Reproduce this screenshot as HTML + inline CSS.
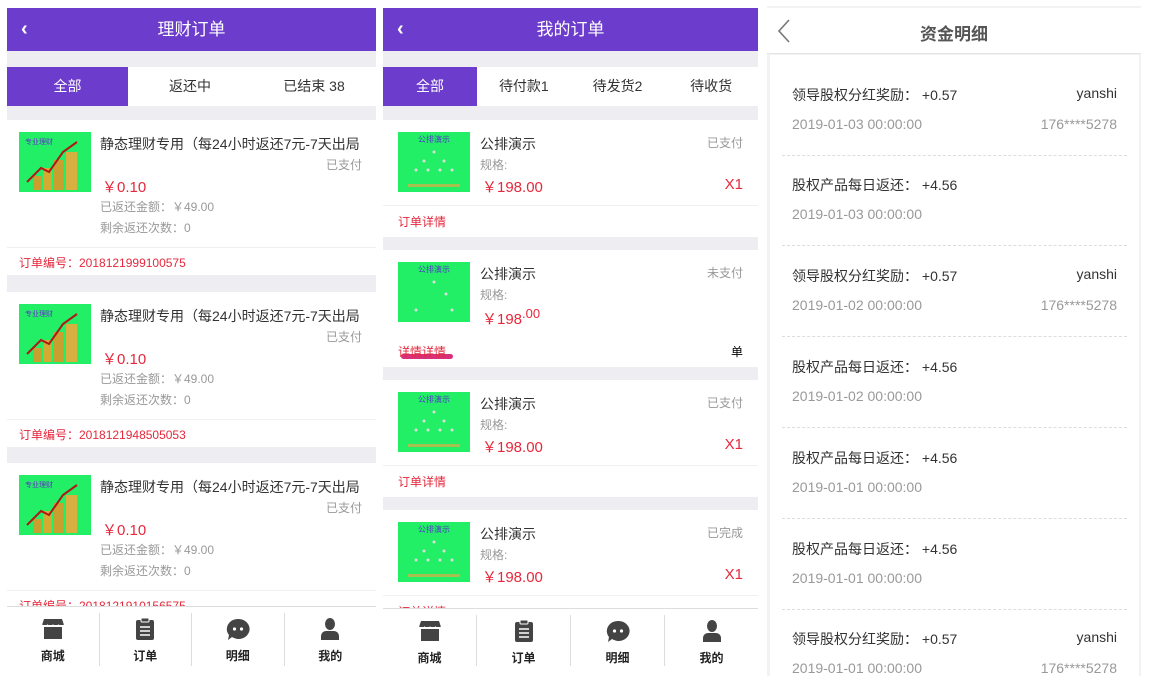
<!DOCTYPE html>
<html><head><meta charset="utf-8"><style>
*{margin:0;padding:0;box-sizing:border-box}
body{width:1149px;height:676px;background:#fff;position:relative;overflow:hidden;font-family:"Liberation Sans","Noto Sans CJK SC",sans-serif;color:#333}
.a{position:absolute;white-space:nowrap}
.p{position:absolute;background:#eeeef2;overflow:hidden}
.hd{position:absolute;left:0;right:0;top:0;height:43px;background:#6c3ccc;color:#fff;font-size:17px;text-align:center;line-height:43px}
.tabs{position:absolute;left:0;right:0;top:59px;height:39px;background:#fff;display:flex;font-size:14px;line-height:39px}
.tabs div{flex:1;text-align:center;color:#333}
.tabs .on{background:#6c3ccc;color:#fff}
.card{position:absolute;left:0;right:0;background:#fff}
.img1{position:absolute;background:#22ee66;overflow:hidden}
.red{color:#e5283c}.gr{color:#999}
.nav{position:absolute;left:0;right:0;bottom:0;background:#fff;border-top:1px solid #ddd;display:flex}
.nav div{flex:1;text-align:center;border-right:1px solid #ddd;margin:6px 0;font-size:12px;font-weight:bold;color:#222;position:relative}
.nav div:last-child{border-right:none}
.nav svg{display:block;margin:5px auto 7px}
.row{position:absolute;left:22px;right:22px;font-size:14px}
</style></head><body>

<!-- Panel 1 -->
<div class="p" style="left:7px;top:8px;width:369px;height:664px">
 <div class="hd"><span class="a" style="left:14px;top:0;font-size:20px;font-weight:bold">&#8249;</span>理财订单</div>
 <div class="tabs"><div class="on" style="flex:0 0 121px">全部</div><div>返还中</div><div>已结束 38</div></div>
 <div class="card" style="top:112px;height:155px">
  <div class="img1" style="left:12px;top:12px;width:72px;height:60px"><svg width="72" height="60"><text x="6" y="12" font-size="7" fill="#6633cc" font-family="Liberation Sans,Noto Sans CJK SC,sans-serif">专业理财</text><rect x="14" y="44" width="8" height="14" fill="#c9a030"/><rect x="24" y="36" width="9" height="22" fill="#d4aa33"/><rect x="35" y="28" width="10" height="30" fill="#c9a030"/><rect x="47" y="20" width="11" height="38" fill="#d8b040"/><polyline points="8,50 22,36 30,40 44,20 58,10" stroke="#b01818" stroke-width="2" fill="none"/></svg></div>
  <span class="a" style="left:93px;top:14px;font-size:14px">静态理财专用（每24小时返还7元-7天出局</span>
  <span class="a gr" style="right:14px;top:36px;font-size:12px">已支付</span>
  <span class="a red" style="left:95px;top:56px;font-size:15px">￥0.10</span>
  <span class="a gr" style="left:93px;top:78px;font-size:12px">已返还金额：￥49.00</span>
  <span class="a gr" style="left:93px;top:99px;font-size:12px">剩余返还次数：0</span>
  <div class="a" style="left:0;right:0;top:127px;border-top:1px solid #f0f0f0"></div>
  <span class="a red" style="left:12px;top:134px;font-size:12px">订单编号：2018121999100575</span>
 </div>
 <div class="card" style="top:284px;height:155px">
  <div class="img1" style="left:12px;top:12px;width:72px;height:60px"><svg width="72" height="60"><text x="6" y="12" font-size="7" fill="#6633cc" font-family="Liberation Sans,Noto Sans CJK SC,sans-serif">专业理财</text><rect x="14" y="44" width="8" height="14" fill="#c9a030"/><rect x="24" y="36" width="9" height="22" fill="#d4aa33"/><rect x="35" y="28" width="10" height="30" fill="#c9a030"/><rect x="47" y="20" width="11" height="38" fill="#d8b040"/><polyline points="8,50 22,36 30,40 44,20 58,10" stroke="#b01818" stroke-width="2" fill="none"/></svg></div>
  <span class="a" style="left:93px;top:14px;font-size:14px">静态理财专用（每24小时返还7元-7天出局</span>
  <span class="a gr" style="right:14px;top:36px;font-size:12px">已支付</span>
  <span class="a red" style="left:95px;top:56px;font-size:15px">￥0.10</span>
  <span class="a gr" style="left:93px;top:78px;font-size:12px">已返还金额：￥49.00</span>
  <span class="a gr" style="left:93px;top:99px;font-size:12px">剩余返还次数：0</span>
  <div class="a" style="left:0;right:0;top:127px;border-top:1px solid #f0f0f0"></div>
  <span class="a red" style="left:12px;top:134px;font-size:12px">订单编号：2018121948505053</span>
 </div>
 <div class="card" style="top:455px;height:155px">
  <div class="img1" style="left:12px;top:12px;width:72px;height:60px"><svg width="72" height="60"><text x="6" y="12" font-size="7" fill="#6633cc" font-family="Liberation Sans,Noto Sans CJK SC,sans-serif">专业理财</text><rect x="14" y="44" width="8" height="14" fill="#c9a030"/><rect x="24" y="36" width="9" height="22" fill="#d4aa33"/><rect x="35" y="28" width="10" height="30" fill="#c9a030"/><rect x="47" y="20" width="11" height="38" fill="#d8b040"/><polyline points="8,50 22,36 30,40 44,20 58,10" stroke="#b01818" stroke-width="2" fill="none"/></svg></div>
  <span class="a" style="left:93px;top:14px;font-size:14px">静态理财专用（每24小时返还7元-7天出局</span>
  <span class="a gr" style="right:14px;top:36px;font-size:12px">已支付</span>
  <span class="a red" style="left:95px;top:56px;font-size:15px">￥0.10</span>
  <span class="a gr" style="left:93px;top:78px;font-size:12px">已返还金额：￥49.00</span>
  <span class="a gr" style="left:93px;top:99px;font-size:12px">剩余返还次数：0</span>
  <div class="a" style="left:0;right:0;top:127px;border-top:1px solid #f0f0f0"></div>
  <span class="a red" style="left:12px;top:134px;font-size:12px">订单编号：2018121910156575</span>
 </div>
 <div class="nav" style="height:66px">
  <div><svg width="24" height="22" viewBox="0 0 24 22"><path d="M3 1h18l2 6H1z" fill="#444"/><path d="M3 9h18v12H3z" fill="#444"/><path d="M1 7q2.75 3 5.5 0q2.75 3 5.5 0q2.75 3 5.5 0q2.75 3 5.5 0" stroke="#fff" stroke-width="1" fill="none"/></svg>商城</div>
  <div><svg width="20" height="22" viewBox="0 0 20 22"><rect x="1" y="2" width="18" height="20" rx="2" fill="#444"/><rect x="6" y="0" width="8" height="4" rx="1" fill="#444" stroke="#fff"/><path d="M5 9h10M5 13h10M5 17h10" stroke="#fff" stroke-width="1.5"/></svg>订单</div>
  <div><svg width="24" height="22" viewBox="0 0 24 22"><path d="M12 1a11 10 0 1 1-6 18l-4 3 1-5A11 10 0 0 1 12 1z" fill="#444"/><circle cx="8.5" cy="11" r="1.6" fill="#fff"/><circle cx="15.5" cy="11" r="1.6" fill="#fff"/></svg>明细</div>
  <div><svg width="22" height="22" viewBox="0 0 22 22"><ellipse cx="11" cy="6" rx="5" ry="6" fill="#444"/><path d="M2 22v-4a5 5 0 0 1 5-5h8a5 5 0 0 1 5 5v4z" fill="#444"/></svg>我的</div>
 </div>
</div>

<!-- Panel 2 -->
<div class="p" style="left:383px;top:8px;width:375px;height:664px">
 <div class="hd"><span class="a" style="left:14px;top:0;font-size:20px;font-weight:bold">&#8249;</span>我的订单</div>
 <div class="tabs" style="top:59px"><div class="on" style="flex:0 0 94px">全部</div><div>待付款1</div><div>待发货2</div><div>待收货</div></div>
 <div class="card" style="top:112px;height:117px">
  <div class="img1" style="left:15px;top:12px;width:72px;height:60px"><svg width="72" height="60"><text x="36" y="10" font-size="8" fill="#5533cc" text-anchor="middle" font-family="Liberation Sans,Noto Sans CJK SC,sans-serif">公排演示</text><g fill="#ddd"><circle cx="36" cy="20" r="1.5"/><circle cx="26" cy="29" r="1.5"/><circle cx="46" cy="29" r="1.5"/><circle cx="18" cy="38" r="1.5"/><circle cx="30" cy="38" r="1.5"/><circle cx="42" cy="38" r="1.5"/><circle cx="54" cy="38" r="1.5"/></g><rect x="10" y="52" width="52" height="3" fill="#a8c050"/></svg></div>
  <span class="a" style="left:97px;top:14px;font-size:14px">公排演示</span>
  <span class="a gr" style="right:15px;top:14px;font-size:12px">已支付</span>
  <span class="a gr" style="left:97px;top:36px;font-size:12px">规格:</span>
  <span class="a red" style="left:99px;top:56px;font-size:15px">￥198.00</span>
  <span class="a red" style="right:15px;top:56px;font-size:15px">X1</span>
  <div class="a" style="left:0;right:0;top:85px;border-top:1px solid #f0f0f0"></div>
  <span class="a red" style="left:15px;top:93px;font-size:12px">订单详情</span>
 </div>
 <div class="card" style="top:242px;height:117px">
  <div class="img1" style="left:15px;top:12px;width:72px;height:60px"><svg width="72" height="60"><text x="36" y="10" font-size="8" fill="#5533cc" text-anchor="middle" font-family="Liberation Sans,Noto Sans CJK SC,sans-serif">公排演示</text><g fill="#ddd"><circle cx="36" cy="20" r="1.5"/><circle cx="48" cy="32" r="1.5"/><circle cx="18" cy="48" r="1.5"/><circle cx="54" cy="48" r="1.5"/></g></svg></div>
  <span class="a" style="left:97px;top:14px;font-size:14px">公排演示</span>
  <span class="a gr" style="right:15px;top:14px;font-size:12px">未支付</span>
  <span class="a gr" style="left:97px;top:36px;font-size:12px">规格:</span>
  <span class="a red" style="left:99px;top:56px;font-size:15px">￥198<sup style="font-size:13px">.00</sup></span>
  <span class="a" style="left:18px;top:104px;width:52px;height:5px;background:#d8307a;border-radius:3px"></span>
  <span class="a red" style="left:15px;top:93px;font-size:12px">详情详情</span>
  <span class="a" style="right:15px;top:93px;font-size:12px;color:#000">单</span>
 </div>
 <div class="card" style="top:372px;height:117px">
  <div class="img1" style="left:15px;top:12px;width:72px;height:60px"><svg width="72" height="60"><text x="36" y="10" font-size="8" fill="#5533cc" text-anchor="middle" font-family="Liberation Sans,Noto Sans CJK SC,sans-serif">公排演示</text><g fill="#ddd"><circle cx="36" cy="20" r="1.5"/><circle cx="26" cy="29" r="1.5"/><circle cx="46" cy="29" r="1.5"/><circle cx="18" cy="38" r="1.5"/><circle cx="30" cy="38" r="1.5"/><circle cx="42" cy="38" r="1.5"/><circle cx="54" cy="38" r="1.5"/></g><rect x="10" y="52" width="52" height="3" fill="#a8c050"/></svg></div>
  <span class="a" style="left:97px;top:14px;font-size:14px">公排演示</span>
  <span class="a gr" style="right:15px;top:14px;font-size:12px">已支付</span>
  <span class="a gr" style="left:97px;top:36px;font-size:12px">规格:</span>
  <span class="a red" style="left:99px;top:56px;font-size:15px">￥198.00</span>
  <span class="a red" style="right:15px;top:56px;font-size:15px">X1</span>
  <div class="a" style="left:0;right:0;top:85px;border-top:1px solid #f0f0f0"></div>
  <span class="a red" style="left:15px;top:93px;font-size:12px">订单详情</span>
 </div>
 <div class="card" style="top:502px;height:117px">
  <div class="img1" style="left:15px;top:12px;width:72px;height:60px"><svg width="72" height="60"><text x="36" y="10" font-size="8" fill="#5533cc" text-anchor="middle" font-family="Liberation Sans,Noto Sans CJK SC,sans-serif">公排演示</text><g fill="#ddd"><circle cx="36" cy="20" r="1.5"/><circle cx="26" cy="29" r="1.5"/><circle cx="46" cy="29" r="1.5"/><circle cx="18" cy="38" r="1.5"/><circle cx="30" cy="38" r="1.5"/><circle cx="42" cy="38" r="1.5"/><circle cx="54" cy="38" r="1.5"/></g><rect x="10" y="52" width="52" height="3" fill="#a8c050"/></svg></div>
  <span class="a" style="left:97px;top:14px;font-size:14px">公排演示</span>
  <span class="a gr" style="right:15px;top:14px;font-size:12px">已完成</span>
  <span class="a gr" style="left:97px;top:36px;font-size:12px">规格:</span>
  <span class="a red" style="left:99px;top:56px;font-size:15px">￥198.00</span>
  <span class="a red" style="right:15px;top:56px;font-size:15px">X1</span>
  <div class="a" style="left:0;right:0;top:85px;border-top:1px solid #f0f0f0"></div>
  <span class="a red" style="left:15px;top:93px;font-size:12px">订单详情</span>
 </div>
 <div class="nav" style="height:64px">
  <div><svg width="24" height="22" viewBox="0 0 24 22"><path d="M3 1h18l2 6H1z" fill="#444"/><path d="M3 9h18v12H3z" fill="#444"/><path d="M1 7q2.75 3 5.5 0q2.75 3 5.5 0q2.75 3 5.5 0q2.75 3 5.5 0" stroke="#fff" stroke-width="1" fill="none"/></svg>商城</div>
  <div><svg width="20" height="22" viewBox="0 0 20 22"><rect x="1" y="2" width="18" height="20" rx="2" fill="#444"/><rect x="6" y="0" width="8" height="4" rx="1" fill="#444" stroke="#fff"/><path d="M5 9h10M5 13h10M5 17h10" stroke="#fff" stroke-width="1.5"/></svg>订单</div>
  <div><svg width="24" height="22" viewBox="0 0 24 22"><path d="M12 1a11 10 0 1 1-6 18l-4 3 1-5A11 10 0 0 1 12 1z" fill="#444"/><circle cx="8.5" cy="11" r="1.6" fill="#fff"/><circle cx="15.5" cy="11" r="1.6" fill="#fff"/></svg>明细</div>
  <div><svg width="22" height="22" viewBox="0 0 22 22"><ellipse cx="11" cy="6" rx="5" ry="6" fill="#444"/><path d="M2 22v-4a5 5 0 0 1 5-5h8a5 5 0 0 1 5 5v4z" fill="#444"/></svg>我的</div>
 </div>
</div>

<!-- Panel 3 -->
<div class="a" style="left:767px;top:6px;width:374px;height:670px;background:#f2f2f2">
 <div class="a" style="left:0;right:0;top:2px;height:46px;background:#fff;border-bottom:1px solid #e4e4e4"></div>
 <svg class="a" style="left:10px;top:13px" width="14" height="24"><path d="M12 1L2 12l10 11" stroke="#777" stroke-width="1.6" fill="none"/></svg>
 <span class="a" style="left:0;right:0;top:14px;text-align:center;font-size:17px;font-weight:bold;color:#555">资金明细</span>
 <div class="a" style="left:3px;right:2px;top:49px;bottom:0;background:#fff">
  <div class="row" style="top:30px">领导股权分红奖励： +0.57<span style="float:right">yanshi</span></div>
  <div class="row gr" style="top:61px">2019-01-03 00:00:00<span style="float:right">176****5278</span></div>
  <div class="a" style="left:12px;right:12px;top:100px;border-top:1px dashed #ddd"></div>
  <div class="row" style="top:120px">股权产品每日返还： +4.56</div>
  <div class="row gr" style="top:151px">2019-01-03 00:00:00</div>
  <div class="a" style="left:12px;right:12px;top:190px;border-top:1px dashed #ddd"></div>
  <div class="row" style="top:211px">领导股权分红奖励： +0.57<span style="float:right">yanshi</span></div>
  <div class="row gr" style="top:242px">2019-01-02 00:00:00<span style="float:right">176****5278</span></div>
  <div class="a" style="left:12px;right:12px;top:281px;border-top:1px dashed #ddd"></div>
  <div class="row" style="top:302px">股权产品每日返还： +4.56</div>
  <div class="row gr" style="top:333px">2019-01-02 00:00:00</div>
  <div class="a" style="left:12px;right:12px;top:372px;border-top:1px dashed #ddd"></div>
  <div class="row" style="top:393px">股权产品每日返还： +4.56</div>
  <div class="row gr" style="top:424px">2019-01-01 00:00:00</div>
  <div class="a" style="left:12px;right:12px;top:463px;border-top:1px dashed #ddd"></div>
  <div class="row" style="top:484px">股权产品每日返还： +4.56</div>
  <div class="row gr" style="top:515px">2019-01-01 00:00:00</div>
  <div class="a" style="left:12px;right:12px;top:554px;border-top:1px dashed #ddd"></div>
  <div class="row" style="top:574px">领导股权分红奖励： +0.57<span style="float:right">yanshi</span></div>
  <div class="row gr" style="top:605px">2019-01-01 00:00:00<span style="float:right">176****5278</span></div>
 </div>
</div>
</body></html>
